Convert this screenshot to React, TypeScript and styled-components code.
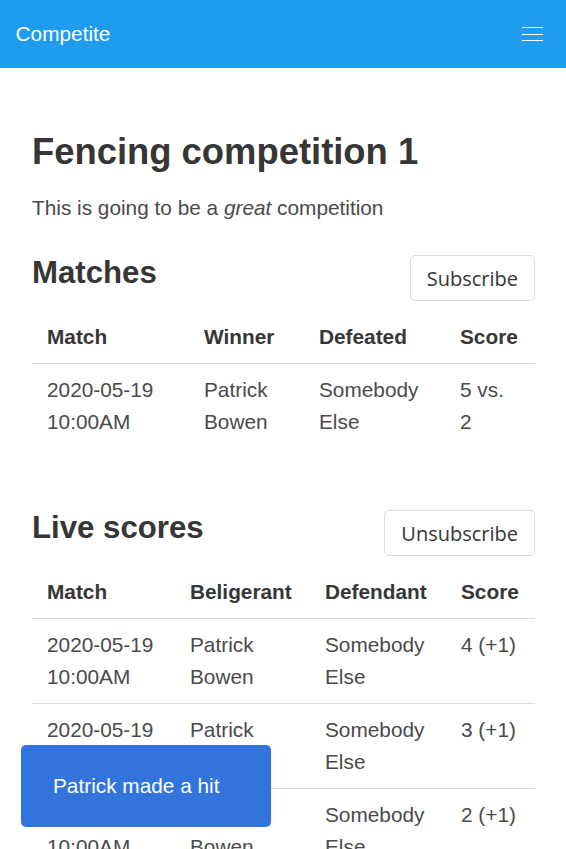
import React from "react";
import styled, { createGlobalStyle } from "styled-components";

const GlobalStyle = createGlobalStyle`
  html, body { margin: 0; padding: 0; background: #fff; }
  body {
    font-family: "Liberation Sans", Arial, sans-serif;
    font-size: 20.8px;
    line-height: 1.5;
    color: #4a4a4a;
  }
  * { box-sizing: border-box; }
`;

const Navbar = styled.nav`
  height: 68px;
  background: #209cee;
  display: flex;
  align-items: stretch;
`;

const Brand = styled.a`
  display: flex;
  align-items: center;
  padding: 0 15.6px;
  color: #fff;
  font-size: 20.8px;
  text-decoration: none;
`;

const Burger = styled.button`
  margin-left: auto;
  width: 67.6px;
  height: 68px;
  background: transparent;
  border: 0;
  padding: 0;
  display: flex;
  flex-direction: column;
  align-items: center;
  justify-content: center;
  gap: 5.5px;
  cursor: pointer;
`;

const BurgerLine = styled.span`
  display: block;
  width: 21px;
  height: 1px;
  background: #fff;
`;

const Section = styled.section`
  padding: 64px 31px 40px 32px;
`;

const Title = styled.h1`
  margin: 0 0 19px;
  font-size: 36.4px;
  line-height: 1.125;
  font-weight: 700;
  color: #363636;
`;

const Lead = styled.p`
  margin: 0 0 32px;
  font-size: 20.8px;
  line-height: 31.2px;
`;

const Level = styled.div<{ $top?: number }>`
  display: flex;
  align-items: flex-start;
  justify-content: space-between;
  margin-top: ${(p) => p.$top ?? 0}px;
`;

const Subtitle = styled.h2`
  margin: 0;
  font-size: 31.2px;
  line-height: 1.125;
  font-weight: 700;
  color: #363636;
`;

const Button = styled.button`
  height: 46px;
  padding: 0 16px;
  border: 1px solid #dbdbdb;
  border-radius: 5px;
  background: #fff;
  color: #363636;
  font-family: "Open Sans", "Noto Sans", sans-serif;
  font-size: 20px;
  cursor: pointer;
`;

const Table = styled.table`
  width: 100%;
  border-collapse: collapse;
  margin-top: 10px;
  table-layout: fixed;
`;

const Col = styled.col<{ $w: number }>`
  width: ${(p) => p.$w}px;
`;

const Th = styled.th`
  text-align: left;
  vertical-align: top;
  padding: 10px 15px;
  line-height: 32px;
  font-weight: 700;
  color: #363636;
  border-bottom: 1px solid #dbdbdb;
`;

const Td = styled.td`
  vertical-align: top;
  padding: 10px 15px;
  line-height: 32px;
  color: #4a4a4a;
`;

const Tr = styled.tr`
  &:not(:last-child) > td {
    border-bottom: 1px solid #dbdbdb;
  }
`;

const Toast = styled.div`
  position: fixed;
  left: 21px;
  bottom: 22px;
  width: 250px;
  height: 82px;
  padding: 0 32px;
  display: flex;
  align-items: center;
  background: #3273dc;
  color: #fff;
  border-radius: 5px;
  font-size: 20.8px;
`;

type Row = [string[], string[], string[], string[]];

const matchRows: Row[] = [
  [["2020-05-19", "10:00AM"], ["Patrick", "Bowen"], ["Somebody", "Else"], ["5 vs.", "2"]],
];

const liveRows: Row[] = [
  [["2020-05-19", "10:00AM"], ["Patrick", "Bowen"], ["Somebody", "Else"], ["4 (+1)"]],
  [["2020-05-19", "10:00AM"], ["Patrick", "Bowen"], ["Somebody", "Else"], ["3 (+1)"]],
  [["2020-05-19", "10:00AM"], ["Patrick", "Bowen"], ["Somebody", "Else"], ["2 (+1)"]],
];

function DataTable({ headers, widths, rows }: { headers: string[]; widths: number[]; rows: Row[] }) {
  return (
    <Table>
      <colgroup>
        {widths.map((w, i) => (
          <Col key={i} $w={w} />
        ))}
      </colgroup>
      <thead>
        <tr>
          {headers.map((h) => (
            <Th key={h}>{h}</Th>
          ))}
        </tr>
      </thead>
      <tbody>
        {rows.map((r, i) => (
          <Tr key={i}>
            {r.map((cell, j) => (
              <Td key={j}>
                {cell.map((line, k) => (
                  <React.Fragment key={k}>
                    {k > 0 && <br />}
                    {line}
                  </React.Fragment>
                ))}
              </Td>
            ))}
          </Tr>
        ))}
      </tbody>
    </Table>
  );
}

export default function App() {
  return (
    <>
      <GlobalStyle />
      <Navbar>
        <Brand href="#">Competite</Brand>
        <Burger aria-label="menu">
          <BurgerLine />
          <BurgerLine />
          <BurgerLine />
        </Burger>
      </Navbar>
      <Section>
        <Title>Fencing competition 1</Title>
        <Lead>
          This is going to be a <em>great</em> competition
        </Lead>
        <Level>
          <Subtitle>Matches</Subtitle>
          <Button>Subscribe</Button>
        </Level>
        <DataTable
          headers={["Match", "Winner", "Defeated", "Score"]}
          widths={[157, 115, 141, 90]}
          rows={matchRows}
        />
        <Level $top={62}>
          <Subtitle>Live scores</Subtitle>
          <Button>Unsubscribe</Button>
        </Level>
        <DataTable
          headers={["Match", "Beligerant", "Defendant", "Score"]}
          widths={[143, 135, 136, 89]}
          rows={liveRows}
        />
      </Section>
      <Toast>Patrick made a hit</Toast>
    </>
  );
}
